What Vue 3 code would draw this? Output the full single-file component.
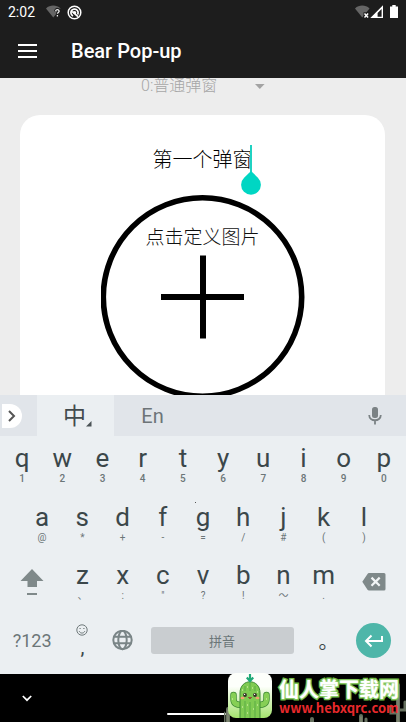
<script setup>
import { ref } from 'vue'

const mode = ref('0')
const title = ref('第一个弹窗')

const rowOne = [
  ['q', '1'], ['w', '2'], ['e', '3'], ['r', '4'], ['t', '5'],
  ['y', '6'], ['u', '7'], ['i', '8'], ['o', '9'], ['p', '0'],
]
const rowTwo = [
  ['a', '@'], ['s', '*'], ['d', '+'], ['f', '-'], ['g', '='],
  ['h', '/'], ['j', '#'], ['k', '('], ['l', ')'],
]
const rowThree = [
  ['z', '、'], ['x', ':'], ['c', '"'], ['v', '?'], ['b', '!'], ['n', '～'], ['m', '.'],
]
</script>

<template>
  <div class="screen">
    <header class="top">
      <div class="status">
        <span class="clock">2:02</span>
        <svg class="wifi" width="16" height="14" viewBox="0 0 16 14">
          <path d="M0 3.4C4-.4 10.500-.4 14.500 3.400L7.300 12.500z" fill="#656565" />
          <path d="M9.700 6.300c0-2.400 3.800-2.200 3.500 0-.2 1.200-1.700 1.200-1.700 2.700M11.500 10v1.600" fill="none" stroke="#1d1d1d" stroke-width="3.400" />
          <path d="M9.700 6.300c0-2.200 3.600-2 3.400 0-.2 1.200-1.700 1.200-1.700 2.500M11.400 9.900v1.500" fill="none" stroke="#eee" stroke-width="1.300" />
        </svg>
        <svg class="ring" width="15" height="15" viewBox="0 0 15 15">
          <circle cx="7.500" cy="7.500" r="6.300" fill="none" stroke="#fff" stroke-width="1.500" />
          <path d="M10.600 9.500A3.600 3.600 0 1 0 6 10.900M5.300 6.500l5.700 5.100" fill="none" stroke="#fff" stroke-width="1.700" />
          <circle cx="7.700" cy="7.500" r="1.500" fill="#fff" />
        </svg>
        <span class="spacer"></span>
        <svg width="15" height="14" viewBox="0 0 15 14">
          <path d="M0 3.400C4-.4 10.500-.4 14.500 3.400L7.300 12.500z" fill="#656565" />
          <path d="M8.500 7.300h6v6h-6z" fill="#1d1d1d" />
          <path d="M9.500 8.600l3.600 3.800M13.100 8.600l-3.600 3.800" stroke="#fff" stroke-width="1.500" />
        </svg>
        <svg width="14" height="14" viewBox="0 0 14 14">
          <path fill-rule="evenodd" d="M13 .3V13H.3zM11.600 4L7.600 8v3.700h4z" fill="#fff" />
        </svg>
        <svg class="battery" width="8" height="14" viewBox="0 0 8 14">
          <path d="M2.300 0h3.400v1.500H8V13H0V1.500h2.300z" fill="#fff" />
        </svg>
      </div>
      <div class="bar">
        <button class="menu" aria-label="Menu">
          <svg width="20" height="14" viewBox="0 0 20 14"><path d="M0 1h19M0 7h19M0 13h19" stroke="#fff" stroke-width="2" /></svg>
        </button>
        <h1>Bear Pop-up</h1>
      </div>
    </header>

    <main class="page">
      <div class="picker">
        <select v-model="mode" aria-label="弹窗">
          <option value="0">0:普通弹窗</option>
        </select>
        <svg width="10" height="5" viewBox="0 0 10 5"><path d="M0 0h9.600L4.800 5z" fill="#a3a3a3" /></svg>
      </div>
      <section class="card">
        <div class="field">
          <input v-model="title" type="text" aria-label="标题" />
          <span class="caret"></span>
          <svg class="handle" width="22" height="24" viewBox="0 0 22 24">
            <path d="M11 0l6.900 6.700a9.900 9.900 0 1 1-13.800 0z" fill="#00d6c3" />
          </svg>
        </div>
        <button class="image">
          <svg class="circle" width="204" height="204" viewBox="0 0 204 204">
            <circle cx="101.500" cy="102" r="99.200" fill="none" stroke="#000" stroke-width="5.600" />
            <path d="M60 102h83M102 60.600v83" stroke="#000" stroke-width="6" />
          </svg>
          <span>点击定义图片</span>
        </button>
      </section>
    </main>

    <section class="keyboard">
      <div class="tools">
        <button class="expand" aria-label="Expand">
          <svg width="8" height="12" viewBox="0 0 8 12"><path d="M1 1l5 5-5 5" fill="none" stroke="#555" stroke-width="2" /></svg>
        </button>
        <button class="tab active">中<svg width="6" height="6" viewBox="0 0 6 6"><path d="M5.500 0v5.500H0z" fill="#4b5356" /></svg></button>
        <button class="tab">En</button>
        <span class="spacer"></span>
        <button class="mic" aria-label="Voice">
          <svg width="14" height="18" viewBox="0 0 14 18">
            <rect x="4" y="0" width="6" height="11" rx="2.500" fill="#7b8285" />
            <path d="M1.200 8c0 7 11.600 7 11.600 0M7 13.500V17.500" fill="none" stroke="#7b8285" stroke-width="1.800" />
          </svg>
        </button>
      </div>
      <div class="keys">
        <div class="row">
          <button v-for="k in rowOne" :key="k[0]" class="key num"><span>{{ k[0] }}</span><small>{{ k[1] }}</small></button>
        </div>
        <div class="row inset">
          <button v-for="k in rowTwo" :key="k[0]" class="key" :class="{ dotted: k[0] === 'g' }"><span>{{ k[0] }}</span><small>{{ k[1] }}</small></button>
        </div>
        <div class="row third">
          <button class="tool" aria-label="Shift">
            <svg width="24" height="28" viewBox="0 0 24 28"><path d="M12 1l11.500 12H17v6H7.500v-6H.5zM7 25h10v2H7z" fill="#7f898a" /></svg>
          </button>
          <button v-for="k in rowThree" :key="k[0]" class="key"><span>{{ k[0] }}</span><small>{{ k[1] }}</small></button>
          <button class="tool" aria-label="Backspace">
            <svg width="24" height="18" viewBox="0 0 24 18">
              <path d="M7 0h15a1.500 1.500 0 0 1 1.500 1.500v14.500a1.500 1.500 0 0 1-1.500 1.500H7a2 2 0 0 1-1.500-.8L.3 8.800 5.500.9A2 2 0 0 1 7 0z" fill="#7f898a" />
              <path d="M9.500 4.600l8.200 8.200M17.700 4.600l-8.200 8.200" stroke="#f2f5f6" stroke-width="2.200" />
            </svg>
          </button>
        </div>
        <div class="row fourth">
          <button class="tool symbols">?123</button>
          <button class="tool comma" aria-label="Emoji">
            <svg width="12" height="12" viewBox="0 0 12 12">
              <circle cx="6" cy="6" r="5.200" fill="none" stroke="#6f797b" />
              <path d="M3.200 7.200c1 2.500 4.600 2.500 5.600 0" fill="none" stroke="#6f797b" />
              <path d="M3.500 4.500h1.200M7.300 4.500h1.200" stroke="#6f797b" stroke-width="1.200" />
            </svg>
            <span>,</span>
          </button>
          <button class="tool" aria-label="Language">
            <svg width="22" height="22" viewBox="0 0 22 22" fill="none" stroke="#7a8587" stroke-width="2">
              <circle cx="10.500" cy="10" r="9.200" />
              <ellipse cx="10.500" cy="10" rx="4.200" ry="9.200" />
              <path d="M2 6.700h17M2 13.300h17" />
            </svg>
          </button>
          <button class="tool space">拼音</button>
          <button class="tool period">。</button>
          <button class="tool" aria-label="Enter">
            <span class="enter">
              <svg width="20" height="14" viewBox="0 0 20 14"><path d="M18 2v5H2.500M7.500 1.500L2 7l5.500 5.500" fill="none" stroke="#fff" stroke-width="2" /></svg>
            </span>
          </button>
        </div>
      </div>
    </section>

    <footer class="nav">
      <button class="down" aria-label="Hide keyboard">
        <svg width="10" height="7" viewBox="0 0 10 7"><path d="M.8 1L5 5.200 9.200 1" fill="none" stroke="#fff" stroke-width="1.700" /></svg>
      </button>
      <span class="home"></span>
      <svg class="cacti" width="182" height="46" viewBox="0 0 182 46" fill="none" stroke-linecap="round">
        <g stroke="#66705f" stroke-width="4">
          <path d="M4 33v13M174 9v37M137 40v6M88 43v3" />
          <path d="M0 37v9M167 30v7h7M181 26v8h-7M142 43v3" stroke-width="3" />
        </g>
        <path d="M4 34v12M174 11v35M137 41v5" stroke="#8c927c" stroke-width="1" />
      </svg>
      <a class="brand" href="#">
        <svg width="44" height="45" viewBox="0 0 44 45">
          <defs>
            <linearGradient id="tile" x1="0" y1="0" x2="0" y2="1">
              <stop offset="0.300" stop-color="#fdfffb" /><stop offset="1" stop-color="#a4e36d" />
            </linearGradient>
            <clipPath id="round"><rect width="44" height="45" rx="8" /></clipPath>
          </defs>
          <g clip-path="url(#round)">
            <rect width="44" height="45" fill="url(#tile)" />
            <path d="M5.500 22v4c0 5 3 6 9 6M38.500 22v4c0 5-3 6-9 6" fill="none" stroke="#3f8b35" stroke-width="6.500" stroke-linecap="round" />
            <path d="M5.500 22v4c0 5 3 6 9 6M38.500 22v4c0 5-3 6-9 6" fill="none" stroke="#86cf55" stroke-width="5" stroke-linecap="round" />
            <path d="M12 46V20c0-15 20-15 20 0v26z" fill="#80cb52" stroke="#3f8b35" />
            <path d="M17 28v17M22 10v8M22 29v16M27 28v17M17 13v5M27 13v5" stroke="#5aab45" stroke-width="1" />
            <path d="M14 17h1M19 14h1M24 15h1M29 19h1M14 34h1M19 32h1M25 36h1M29 32h1M19 40h1M4 26h1M38 26h1" stroke="#e5f6bd" stroke-width="1" />
            <circle cx="17" cy="22" r="1.900" fill="#352f26" /><circle cx="27" cy="22" r="1.900" fill="#352f26" />
            <circle cx="16.600" cy="21.400" r=".6" fill="#fff" /><circle cx="26.600" cy="21.400" r=".6" fill="#fff" />
            <ellipse cx="14.500" cy="25" rx="2" ry="1.200" fill="#f2a371" /><ellipse cx="29.500" cy="25" rx="2" ry="1.200" fill="#f2a371" />
            <path d="M20.500 24c.5 2 2.500 2 3 0" fill="#b44d3d" stroke="#6c3a22" stroke-width=".7" />
            <path d="M22 1v6M18.800 4.500L22 8l3.200-3.500" fill="none" stroke="#20a978" stroke-width="2.200" />
          </g>
        </svg>
        <span class="words">
          <strong>仙人掌下载网</strong>
          <em>www.hebxqrc.com</em>
        </span>
      </a>
    </footer>
  </div>
</template>

<style>
body {
  background: #ededed;
}
</style>

<style scoped>
.screen {
  display: flex;
  flex-direction: column;
  height: 100vh;
  overflow: hidden;
  font-family: Roboto, "Noto Sans CJK SC", sans-serif;
}
button,
input,
select {
  margin: 0;
  padding: 0;
  border: 0;
  outline: 0;
  background: none;
  color: inherit;
  font: inherit;
}
svg {
  display: block;
  flex: none;
}
.spacer {
  flex: 1;
}
.top {
  flex: none;
  background: #1d1d1d;
  color: #fff;
}
.status {
  display: flex;
  align-items: center;
  height: 24px;
  padding: 0 8px;
  font-size: 14px;
}
.wifi {
  margin-left: 11px;
}
.ring {
  margin-left: 5px;
}
.battery {
  margin-left: 6px;
}
.bar {
  display: flex;
  align-items: center;
  gap: 33px;
  height: 54px;
  padding: 0 18px;
}
h1 {
  margin: 0;
  font-size: 20px;
  font-weight: 500;
  line-height: 28px;
}
.page {
  flex: 1;
  min-height: 0;
  overflow: hidden;
  background: #ededed;
}
.picker {
  display: grid;
  align-items: center;
  width: 124px;
  height: 16px;
  margin: 0 auto;
  color: #a6a6a6;
}
.picker > * {
  grid-area: 1 / 1;
}
.picker select {
  appearance: none;
  width: 100%;
  height: 16px;
  font-size: 16px;
  font-weight: 300;
  line-height: 16px;
}
.picker svg {
  justify-self: end;
  pointer-events: none;
}
.card {
  display: flex;
  flex-direction: column;
  align-items: center;
  margin: 21px 21px 0 20px;
  padding: 28px 20px;
  border-radius: 20px;
  background: #fff;
}
.field {
  position: relative;
  width: 100%;
}
.field input {
  display: block;
  width: 100%;
  height: 30px;
  color: #000;
  font-size: 20px;
  font-weight: 300;
  line-height: 28px;
  text-align: center;
}
.caret {
  position: absolute;
  top: 2px;
  left: calc(50% + 47px);
  width: 2px;
  height: 28px;
  background: #20d2c2;
}
.handle {
  position: absolute;
  top: 28px;
  left: calc(50% + 37px);
}
.image {
  display: grid;
  justify-items: center;
  margin-top: 22px;
  color: #111;
}
.image > * {
  grid-area: 1 / 1;
}
.image span {
  margin-top: 28px;
  font-size: 19px;
  font-weight: 300;
  line-height: 30px;
}
.keyboard {
  flex: none;
  background: #ebeff2;
  color: #3b474a;
}
.tools {
  display: flex;
  align-items: center;
  height: 41px;
  padding: 0 24px 0 2px;
  background: #e1e5ea;
}
.expand {
  display: flex;
  align-items: center;
  justify-content: center;
  width: 20px;
  height: 24px;
  margin-right: 15px;
  border-radius: 0 12px 12px 0;
  background: #fff;
}
.tab {
  display: flex;
  align-items: center;
  justify-content: center;
  width: 77px;
  height: 41px;
  color: #6d7478;
  font-size: 20px;
}
.tab.active {
  padding: 0 0 4px 4px;
  background: #ebeff2;
  color: #434b4e;
  font-size: 23px;
  font-weight: 400;
  box-sizing: border-box;
}
.tab svg {
  align-self: flex-end;
  margin-bottom: 5px;
}
.keys {
  display: grid;
  grid-template-rows: repeat(4, 1fr);
  height: 234px;
  padding: 0 2px 4px;
}
.row {
  display: grid;
  grid-template-columns: repeat(10, 1fr);
}
.inset {
  grid-template-columns: repeat(9, 1fr);
  padding: 0 20px;
}
.third {
  grid-template-columns: 3fr repeat(7, 2fr) 3fr;
}
.fourth {
  grid-template-columns: 3fr 2fr 2fr 8fr 2fr 3fr;
}
.key {
  position: relative;
  display: flex;
  flex-direction: column;
  align-items: center;
  justify-content: flex-start;
  min-width: 0;
  padding-top: 8px;
}
.key span {
  font-size: 26px;
  line-height: 28px;
}
.key small {
  color: #6b7678;
  font-size: 10px;
  line-height: 14px;
}
.num small {
  font-weight: 500;
}
.dotted::before {
  content: "";
  position: absolute;
  top: 7px;
  left: 12px;
  width: 1px;
  height: 1px;
  background: #555;
}
.tool {
  display: flex;
  align-items: center;
  justify-content: center;
  min-width: 0;
  color: #6b7678;
}
.symbols {
  font-size: 18px;
}
.comma {
  flex-direction: column;
}
.comma span {
  color: #3b474a;
  font-size: 20px;
  line-height: 22px;
}
.space {
  align-self: center;
  height: 27px;
  margin: 0 10px 0 8px;
  border-radius: 3px;
  background: #c9cdd0;
  font-size: 13px;
}
.period {
  padding-left: 10px;
  color: #3b474a;
  font-size: 20px;
}
.enter {
  display: flex;
  align-items: center;
  justify-content: center;
  width: 35px;
  height: 35px;
  border-radius: 50%;
  background: #4eb6a9;
}
.nav {
  position: relative;
  display: flex;
  flex: none;
  align-items: center;
  justify-content: center;
  height: 48px;
  background: #000;
}
.down {
  position: absolute;
  top: 21px;
  left: 22px;
}
.home {
  align-self: flex-end;
  width: 72px;
  height: 2px;
  margin-bottom: 7px;
  border-radius: 1px;
  background: #fff;
}
.cacti {
  position: absolute;
  right: 0;
  bottom: 0;
}
.brand {
  position: absolute;
  right: 7px;
  bottom: 4px;
  display: flex;
  align-items: center;
  gap: 7px;
  text-decoration: none;
}
.words {
  display: flex;
  flex-direction: column;
}
.words strong {
  color: #fff;
  font-family: "Noto Sans CJK SC", sans-serif;
  font-size: 20px;
  font-weight: 700;
  line-height: 24px;
  paint-order: stroke fill;
  -webkit-text-stroke: 3px #69b83e;
  text-shadow: 0 0 2px #e4f7d8;
}
.words em {
  color: #e8292c;
  font-family: "Noto Sans CJK SC", sans-serif;
  font-size: 13px;
  font-style: normal;
  font-weight: 700;
  line-height: 14px;
}
</style>
